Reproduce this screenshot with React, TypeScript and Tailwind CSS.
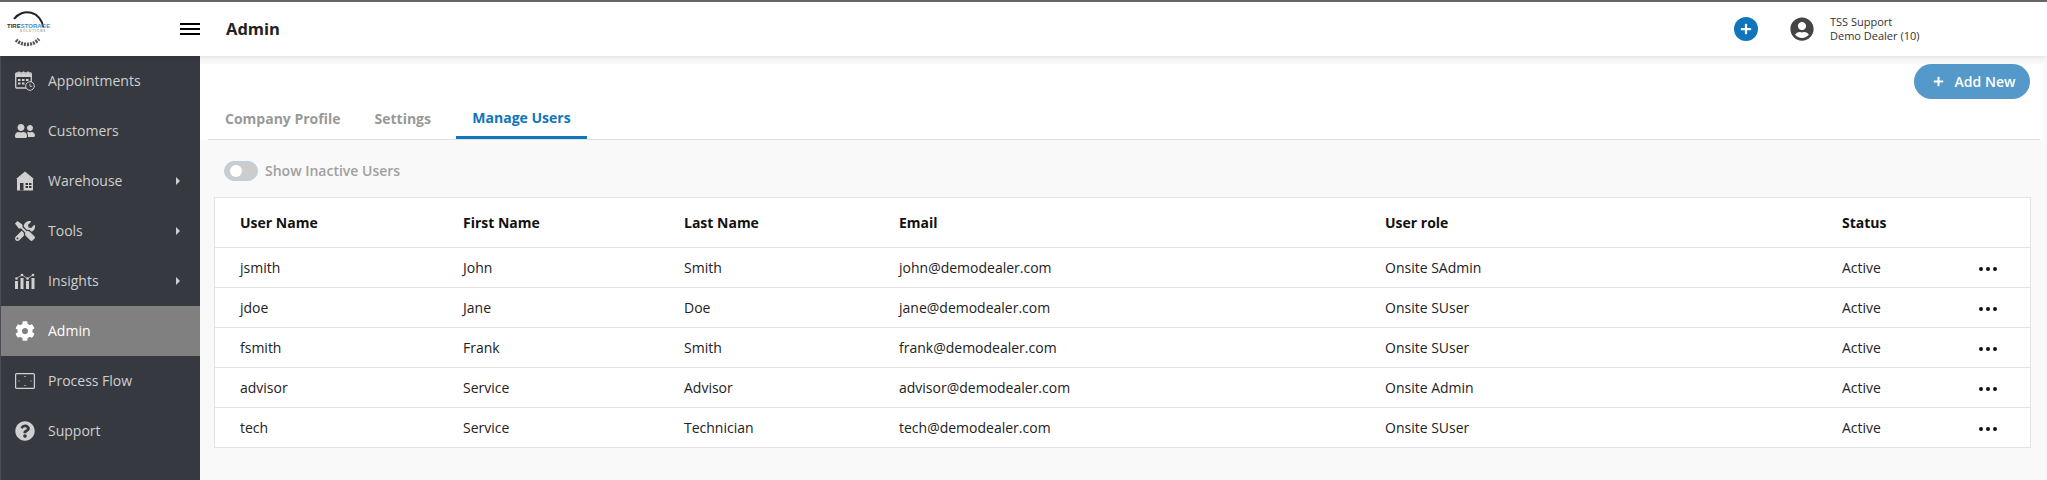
import type { ReactNode } from "react";
import { FaCog, FaPlus, FaQuestionCircle, FaTools, FaUserCircle, FaUserFriends } from "react-icons/fa";

const users = [
  { userName: "jsmith", first: "John", last: "Smith", email: "john@demodealer.com", role: "Onsite SAdmin" },
  { userName: "jdoe", first: "Jane", last: "Doe", email: "jane@demodealer.com", role: "Onsite SUser" },
  { userName: "fsmith", first: "Frank", last: "Smith", email: "frank@demodealer.com", role: "Onsite SUser" },
  { userName: "advisor", first: "Service", last: "Advisor", email: "advisor@demodealer.com", role: "Onsite Admin" },
  { userName: "tech", first: "Service", last: "Technician", email: "tech@demodealer.com", role: "Onsite SUser" },
];

const rowGrid = "grid grid-cols-[223px_221px_215px_486px_457px_1fr] pl-[25px] items-center";

function Logo() {
  return (
    <div className="relative w-[44px] h-[36px]">
      <svg viewBox="0 0 44 36" className="absolute inset-0 w-full h-full">
        <path d="M6 8 A16 16 0 0 1 35 16" fill="none" stroke="#222" strokeWidth="2" />
        <path d="M8 29 A16 16 0 0 0 31 28" fill="none" stroke="#555" strokeWidth="3.5" strokeDasharray="2 1" />
      </svg>
      <span className="absolute top-[12px] left-[-1px] flex text-[6px] leading-[6px] font-black font-['Liberation_Sans',sans-serif] whitespace-nowrap">
        <span className="text-[#333]">TIRE</span>
        <span className="text-[#3f8fc9]">STORAGE</span>
      </span>
      <span className="absolute top-[18px] left-[12px] text-[3px] leading-[4px] tracking-[1px] text-[#666] font-['Liberation_Sans',sans-serif] whitespace-nowrap">
        SOLUTIONS
      </span>
    </div>
  );
}

function CalendarIcon() {
  return (
    <svg viewBox="0 0 20 20" className="w-[20px] h-[20px]">
      <rect x="0.7" y="2" width="15.6" height="15" rx="1" fill="none" stroke="#d0d0d0" strokeWidth="1.3" />
      <path d="M0.7 2.5h15.6v3.5H0.7z" fill="#d0d0d0" />
      <path d="M4 0.5v3M8.5 0.5v3M13 0.5v3" stroke="#d0d0d0" strokeWidth="1.6" />
      <path d="M3 8h2.5v2H3zM7 8h2.5v2H7zM11 8h2.5v2H11zM3 11.5h2.5v2H3zM7 11.5h2.5v2H7z" fill="#d0d0d0" />
      <circle cx="15" cy="15" r="4.3" fill="#363a40" stroke="#d0d0d0" />
      <path d="M15 12.6V15.3H17.2" fill="none" stroke="#d0d0d0" strokeWidth="0.9" />
    </svg>
  );
}

function WarehouseIcon() {
  return (
    <svg viewBox="0 0 20 20" className="w-[20px] h-[20px]" fill="#d0d0d0">
      <path d="M10 0.5L19 8H18V19.5H2V8H1Z" />
      <rect x="5" y="12" width="3.5" height="7.5" fill="#363a40" />
      <path d="M10.5 12h2.5v2h-2.5zM14 12h2.5v2H14zM10.5 15h2.5v2h-2.5zM14 15h2.5v2H14z" fill="#363a40" />
    </svg>
  );
}

function InsightsIcon() {
  return (
    <svg viewBox="0 0 20 16" className="w-[20px] h-[16px]" fill="#d0d0d0">
      <rect x="0" y="8" width="3" height="8" />
      <rect x="5.5" y="5" width="3" height="11" />
      <rect x="11" y="8" width="3" height="8" />
      <rect x="16.5" y="5" width="3" height="11" />
      <circle cx="1.5" cy="5.5" r="1.3" />
      <circle cx="7" cy="2" r="1.3" />
      <circle cx="12.5" cy="5.5" r="1.3" />
      <circle cx="18" cy="2" r="1.3" />
      <path d="M1.5 5.5L7 2L12.5 5.5L18 2" fill="none" stroke="#d0d0d0" strokeWidth="0.7" />
    </svg>
  );
}

function ProcessIcon() {
  return (
    <svg viewBox="0 0 20 16" className="w-[20px] h-[16px]">
      <rect x="0.6" y="0.6" width="18.8" height="14.8" rx="1" fill="none" stroke="#d0d0d0" strokeWidth="1.2" />
      <path d="M10 3v1M10 12v1M3.5 8h1M15.5 8h1" stroke="#d0d0d0" strokeWidth="1.2" />
    </svg>
  );
}

function NavItem({ icon, label, arrow, active }: { icon: ReactNode; label: string; arrow?: boolean; active?: boolean }) {
  return (
    <div className={`relative flex items-center h-[50px] pl-[14px] text-[14px] ${active ? "bg-[#808080] text-white" : "text-[#cfcfcf]"}`}>
      <span className="w-[33px] flex items-center">{icon}</span>
      <span className="mt-[-1px]">{label}</span>
      {arrow && (
        <span className="absolute left-[175px] top-[21px] w-0 h-0 border-y-[4px] border-y-transparent border-l-[4px] border-l-[#cfcfcf]" />
      )}
    </div>
  );
}

function Tab({ label, active }: { label: string; active?: boolean }) {
  return (
    <div className={`h-[40px] flex items-center text-[14px] font-bold whitespace-nowrap ${active ? "ml-2 w-[131px] justify-center text-[#0f75bc] border-b-[3px] border-[#0f75bc] mb-[-1px]" : "px-[17px] pb-[1px] text-[#999999]"}`}>
      {label}
    </div>
  );
}

export default function App() {
  return (
    <div className="h-screen overflow-hidden flex flex-col bg-[#f9f9f9] font-['Open_Sans',sans-serif] text-[#333]">
      <header className="relative z-10 h-[56px] flex items-center bg-white border-t-[2px] border-[#666] shadow-[0_1px_6px_rgba(0,0,0,0.12)]">
        <div className="w-[180px] pl-[8px]">
          <Logo />
        </div>
        <div className="w-[20px] flex flex-col gap-[3px]">
          <span className="h-[2px] bg-black" />
          <span className="h-[2px] bg-black" />
          <span className="h-[2px] bg-black" />
        </div>
        <h1 className="ml-[26px] text-[16.5px] font-bold text-[#222]">Admin</h1>
        <div className="ml-auto flex items-center w-[313px]">
          <span className="w-[24px] h-[24px] rounded-full bg-[#0f75bc] flex items-center justify-center">
            <FaPlus className="w-[12px] h-[12px] text-white" />
          </span>
          <FaUserCircle className="ml-[32px] w-[24px] h-[24px] text-[#444]" />
          <div className="ml-[16px] text-[11px] leading-[14px] text-[#333]">
            <div>TSS Support</div>
            <div>Demo Dealer (10)</div>
          </div>
        </div>
      </header>

      <div className="flex-1 flex min-h-0">
        <aside className="w-[200px] shrink-0 bg-[#363a40] border-l border-[#4a4e54]">
          <NavItem icon={<CalendarIcon />} label="Appointments" />
          <NavItem icon={<FaUserFriends className="w-[20px] h-[16px] text-[#d0d0d0]" />} label="Customers" />
          <NavItem icon={<WarehouseIcon />} label="Warehouse" arrow />
          <NavItem icon={<FaTools className="w-[20px] h-[20px] text-[#d0d0d0]" />} label="Tools" arrow />
          <NavItem icon={<InsightsIcon />} label="Insights" arrow />
          <NavItem icon={<FaCog className="w-[20px] h-[20px] text-white" />} label="Admin" active />
          <NavItem icon={<ProcessIcon />} label="Process Flow" />
          <NavItem icon={<FaQuestionCircle className="w-[20px] h-[20px] text-[#d0d0d0]" />} label="Support" />
        </aside>

        <main className="flex-1 min-w-0 pt-[8px]">
          <div className="bg-white mr-[4px]">
            <div className="h-[35px] flex justify-end pr-[13px]">
              <button className="w-[116px] h-[35px] pl-[4px] rounded-full bg-[#5499c9] text-white text-[14px] font-semibold flex items-center justify-center gap-[11px]">
                <FaPlus className="w-[11px] h-[11px]" />
                Add New
              </button>
            </div>
            <div className="ml-[8px] mr-[3px] flex border-b border-[#e0e0e0]">
              <Tab label="Company Profile" />
              <Tab label="Settings" />
              <Tab label="Manage Users" active />
            </div>
          </div>

          <div className="pl-[14px] pr-[16px]">
            <div className="h-[57px] pl-[10px] pt-[21px] flex items-start gap-[7px]">
              <span className="relative w-[34px] h-[20px] rounded-full bg-[#cccccc] border border-[#b5d3ea]">
                <span className="absolute left-[5px] top-[3px] w-[12px] h-[12px] rounded-full bg-white" />
              </span>
              <span className="text-[14px] leading-[20px] font-semibold text-[#a0a0a0]">Show Inactive Users</span>
            </div>

            <div className="bg-white border border-[#e3e3e3] border-b-0">
              <div className={`${rowGrid} h-[49px] text-[14px] font-bold text-[#111]`}>
                <span>User Name</span>
                <span>First Name</span>
                <span>Last Name</span>
                <span>Email</span>
                <span>User role</span>
                <span>Status</span>
              </div>
              {users.map((u) => (
                <div key={u.userName} className={`${rowGrid} h-[40px] border-t border-[#e3e3e3] text-[14px] text-[#222]`}>
                  <span>{u.userName}</span>
                  <span>{u.first}</span>
                  <span>{u.last}</span>
                  <span>{u.email}</span>
                  <span>{u.role}</span>
                  <span className="flex items-center justify-between pr-[33px]">
                    Active
                    <span className="flex gap-[3px] pt-[3px]">
                      <span className="w-[4px] h-[4px] rounded-full bg-[#111]" />
                      <span className="w-[4px] h-[4px] rounded-full bg-[#111]" />
                      <span className="w-[4px] h-[4px] rounded-full bg-[#111]" />
                    </span>
                  </span>
                </div>
              ))}
              <div className="border-t border-[#e3e3e3]" />
            </div>
          </div>
        </main>
      </div>
    </div>
  );
}
